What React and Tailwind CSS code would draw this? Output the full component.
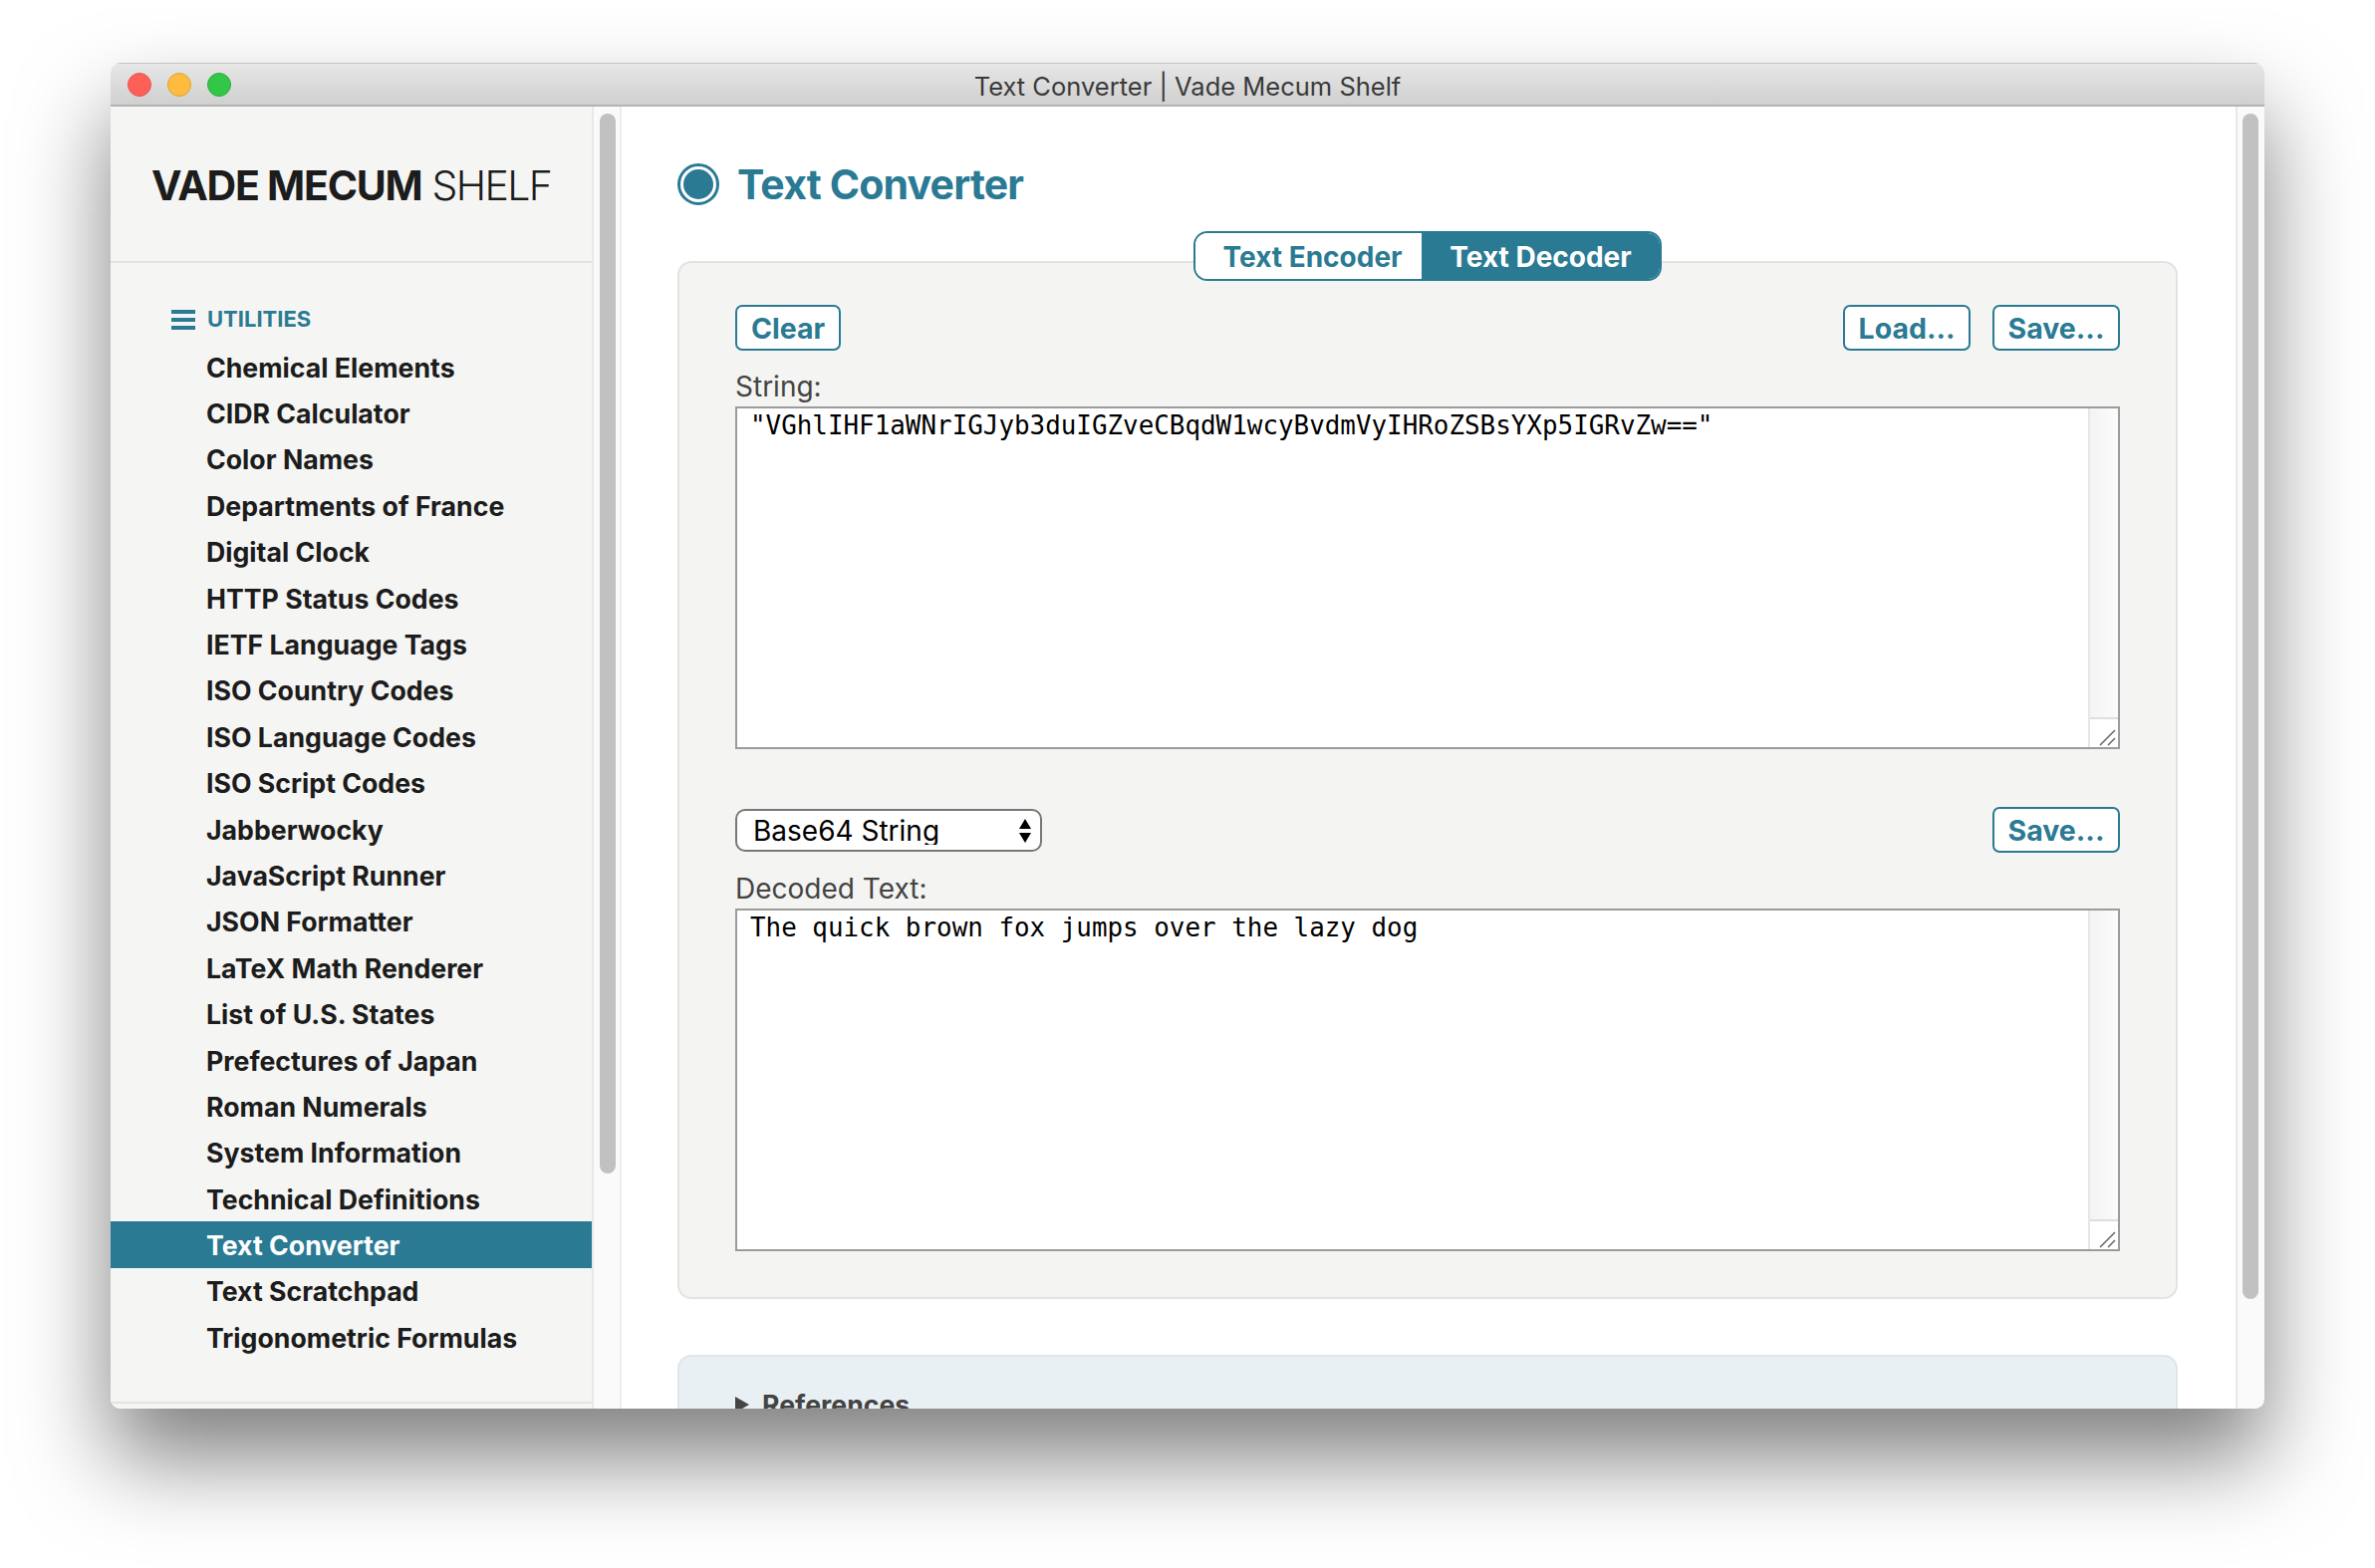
const items = ["Chemical Elements","CIDR Calculator","Color Names","Departments of France","Digital Clock","HTTP Status Codes","IETF Language Tags","ISO Country Codes","ISO Language Codes","ISO Script Codes","Jabberwocky","JavaScript Runner","JSON Formatter","LaTeX Math Renderer","List of U.S. States","Prefectures of Japan","Roman Numerals","System Information","Technical Definitions","Text Converter","Text Scratchpad","Trigonometric Formulas"];

function Btn({ children, className = "" }) {
  return (
    <button className={`h-[46px] rounded-[7px] border-2 border-[#2b7a94] bg-white pt-[2px] text-[28.5px] leading-none font-bold text-[#2b7a94] ${className}`}>
      {children}
    </button>
  );
}

function Area({ value, className = "" }) {
  return (
    <div className={`relative flex h-[344px] w-[1390px] border-2 border-[#9b9b9b] bg-white ${className}`}>
      <textarea
        readOnly
        value={value}
        className="h-full flex-1 resize-none overflow-hidden px-[13px] py-[2px] font-['DejaVu_Sans_Mono',monospace] text-[25.9px] leading-[30px] text-black outline-none"
      />
      <div className="flex w-[30px] flex-col border-l-2 border-[#e6e6e6]">
        <div className="flex-1 bg-gradient-to-r from-[#f4f4f4] to-[#fbfbfb]" />
        <div className="flex h-[30px] items-end justify-end border-t-2 border-[#dedede] bg-white">
          <svg width="18" height="18" viewBox="0 0 18 18" className="mb-[1px] mr-[1px]">
            <path d="M1 17 L16 2 M9 17 L16 10" stroke="#666" strokeWidth="1.5" fill="none" />
          </svg>
        </div>
      </div>
    </div>
  );
}

export default function App() {
  return (
    <div className="h-screen w-full overflow-hidden bg-white pl-[111px] pt-[63px] font-[Inter,sans-serif]">
      <div className="flex h-[1351px] w-[2162px] flex-col overflow-hidden rounded-[10px] shadow-[0_50px_90px_rgba(0,0,0,0.5)]">
        <div className="relative flex h-[44px] shrink-0 items-center border-b-2 border-[#b3b3b3] bg-gradient-to-b from-[#e7e7e7] to-[#d0d0d0] pl-[17px] pt-[2px] shadow-[inset_0_1px_0_#c4c4c4]">
          <div className="flex gap-[16px]">
            <span className="h-[24px] w-[24px] rounded-full border border-[#e5544e] bg-[#fe5f58]" />
            <span className="h-[24px] w-[24px] rounded-full border border-[#dfa230] bg-[#fdbc40]" />
            <span className="h-[24px] w-[24px] rounded-full border border-[#2aae3c] bg-[#33c748]" />
          </div>
          <div className="flex-1 pr-[121px] pt-[4px] text-center text-[25.5px] leading-none text-[#3a3a3a]">Text Converter | Vade Mecum Shelf</div>
        </div>
        <div className="flex min-h-0 flex-1 bg-white shadow-[inset_-1px_0_0_#a8a8a8]">
          <aside className="flex h-full w-[485px] shrink-0 flex-col border-r-2 border-[#e8e8e6] bg-[#f5f5f3]">
            <div className="flex h-[157px] shrink-0 items-start border-b-2 border-[#e3e3e1] pl-[41px] pt-[54px] text-[41px] leading-[50px] tracking-[-0.03em] text-[#1c1c1c]">
              <span className="font-bold">VADE MECUM</span>
              <span className="ml-[10px] font-light tracking-[-0.04em]">SHELF</span>
            </div>
            <div className="flex h-[81px] shrink-0 items-start gap-[12px] pl-[61px] pt-[43px]">
              <svg width="24" height="20" viewBox="0 0 24 20" fill="#2b7a94" className="mt-[4px]">
                <rect width="24" height="4" />
                <rect y="8" width="24" height="4" />
                <rect y="16" width="24" height="4" />
              </svg>
              <span className="text-[22px] font-bold leading-[26px] text-[#2b7a94]">UTILITIES</span>
            </div>
            <nav className="flex-1">
              {items.map((t) => (
                <div
                  key={t}
                  className={`flex h-[46.4px] items-center pl-[96px] pt-[1px] text-[26.7px] font-bold ${t === "Text Converter" ? "bg-[#2b7a94] text-white" : "text-[#1c1c1c]"}`}
                >
                  {t}
                </div>
              ))}
            </nav>
            <div className="h-[7px] shrink-0 border-t-2 border-[#e3e3e1]" />
          </aside>
          <div className="flex w-[28px] shrink-0 flex-col border-r-2 border-[#ececec] bg-[#fafafa] pl-[6px] pt-[7px]">
            <div className="h-[1064px] w-[16px] rounded-full bg-[#c1c1c1]" />
          </div>
          <main className="min-w-0 flex-1 pl-[56px]">
            <div className="flex h-[155px] items-start gap-[18px] pt-[57px]">
              <span className="flex h-[42px] w-[42px] items-center justify-center rounded-full border-[3px] border-[#2b7a94]">
                <span className="h-[30px] w-[30px] rounded-full bg-[#2b7a94]" />
              </span>
              <h1 className="mt-[-3px] text-[41px] font-bold leading-[48px] tracking-[-0.02em] text-[#2b7a94]">Text Converter</h1>
            </div>
            <section className="relative h-[1042px] w-[1506px] rounded-[14px] border-2 border-[#e3e3e1] bg-[#f4f4f2] px-[56px] pt-[42px]">
              <div className="absolute left-[516px] top-[-32px] flex h-[50px] w-[470px] overflow-hidden rounded-[14px] border-2 border-[#2b7a94] text-[28px] font-bold">
                <div className="flex w-[227px] items-center justify-center bg-white pl-[8px] pt-[2px] text-[#2b7a94]">Text Encoder</div>
                <div className="flex flex-1 items-center justify-center bg-[#2b7a94] pt-[2px] text-white">Text Decoder</div>
              </div>
              <div className="flex items-start justify-between">
                <Btn className="w-[106px]">Clear</Btn>
                <div className="flex gap-[22px]">
                  <Btn className="w-[128px]">Load...</Btn>
                  <Btn className="w-[128px]">Save...</Btn>
                </div>
              </div>
              <div className="mt-[17px] h-[39px] text-[28px] leading-[38px] text-[#444]">String:</div>
              <Area value={'"VGhlIHF1aWNrIGJyb3duIGZveCBqdW1wcyBvdmVyIHRoZSBsYXp5IGRvZw=="'} />
              <div className="mt-[58px] flex items-start justify-between">
                <div className="relative mt-[2px]">
                  <select className="h-[43px] w-[308px] appearance-none rounded-[10px] border-2 border-[#777] bg-white pl-[16px] text-[28px] leading-none text-black outline-none">
                    <option>Base64 String</option>
                  </select>
                  <svg width="14" height="24" viewBox="0 0 14 24" fill="#000" className="pointer-events-none absolute right-[10px] top-[10px]">
                    <path d="M7 0 L13 10 H1 Z M7 24 L1 14 H13 Z" />
                  </svg>
                </div>
                <Btn className="w-[128px]">Save...</Btn>
              </div>
              <div className="mt-[17px] h-[39px] text-[28px] leading-[38px] text-[#444]">Decoded Text:</div>
              <Area value="The quick brown fox jumps over the lazy dog" />
              <details open className="absolute left-[-2px] top-[1096px] h-[200px] w-[1506px] rounded-[14px] border-2 border-[#dfe6ea] bg-[#e9f0f3] pl-[56px] pt-[32px]">
                <summary className="flex items-center gap-[13px] text-[26.7px] font-bold leading-[32px] text-[#444]">
                  <span className="h-0 w-0 border-y-[8px] border-l-[14px] border-y-transparent border-l-[#444]" />
                  References
                </summary>
              </details>
            </section>
          </main>
          <div className="flex w-[29px] shrink-0 flex-col border-l-2 border-[#e8e8e8] bg-[#fafafa] pl-[5px] pt-[7px]">
            <div className="h-[1190px] w-[16px] rounded-full bg-[#c1c1c1]" />
          </div>
        </div>
      </div>
    </div>
  );
}
